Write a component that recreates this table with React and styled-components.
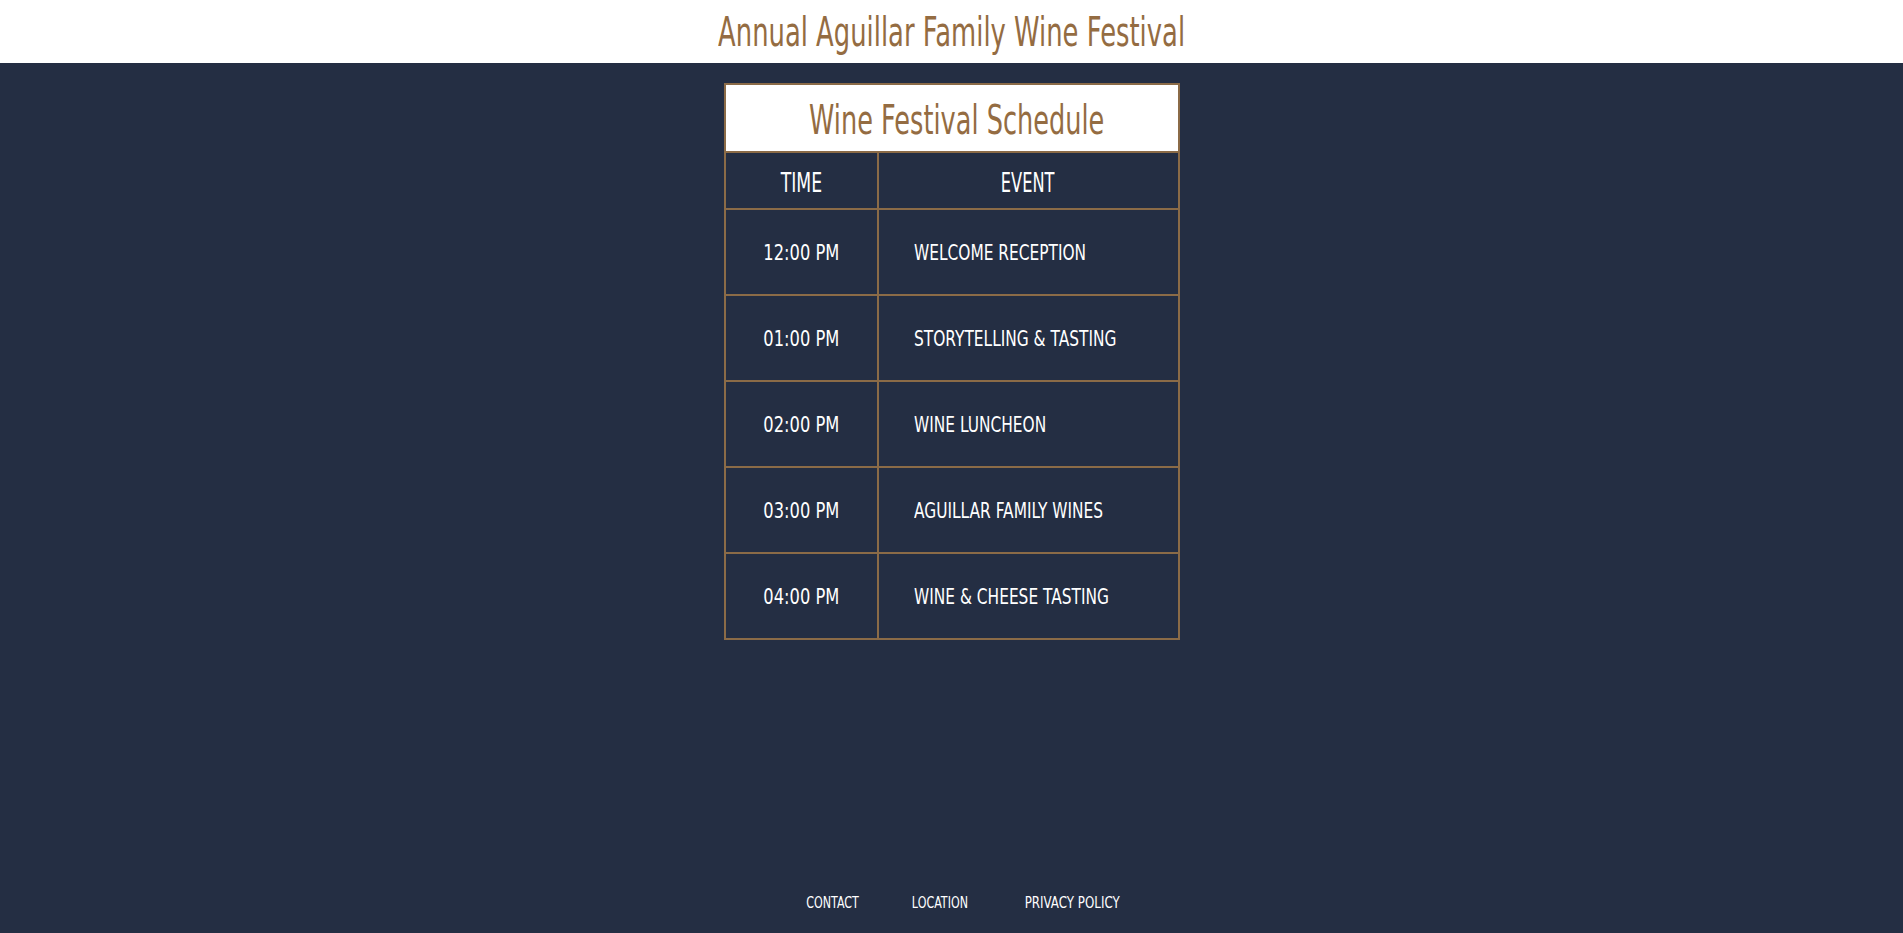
import React from 'react';
import styled, { createGlobalStyle } from 'styled-components';

const GlobalStyle = createGlobalStyle`
  html, body {
    margin: 0;
    padding: 0;
  }
  body {
    background: #242e43;
    font-family: "DejaVu Sans", "Liberation Sans", sans-serif;
  }
`;

// no condensed face installed, so narrow the glyphs by hand
const Narrow = styled.span`
  display: inline-block;
  white-space: nowrap;
  transform: scaleX(${(props) => props.$scale || 0.7});
  transform-origin: ${(props) => props.$origin || 'center'};
`;

const Page = styled.div`
  display: flex;
  flex-direction: column;
  min-height: 100vh;
`;

const Header = styled.header`
  height: 63px;
  background: #ffffff;
  display: flex;
  align-items: center;
  justify-content: center;
`;

const SiteTitle = styled.h1`
  margin: 0;
  font-size: 41px;
  font-weight: 400;
  color: #946c42;
`;

const Main = styled.main`
  flex: 1;
  display: flex;
  justify-content: center;
  align-items: flex-start;
  padding-top: 20px;
`;

const Schedule = styled.table`
  width: 456px;
  table-layout: fixed;
  border-collapse: collapse;
  border: 2px solid #8b6b47;
`;

const Column = styled.col`
  width: ${(props) => props.width || 'auto'};
`;

const Caption = styled.th`
  height: 60px;
  padding: 5px 0 1px;
  background: #ffffff;
  color: #946c42;
  font-size: 40px;
  font-weight: 400;
  border: 2px solid #8b6b47;
`;

const HeadCell = styled.th`
  height: 52px;
  padding: 3px 0 0;
  color: #ffffff;
  font-size: 27px;
  font-weight: 400;
  text-align: center;
  border: 2px solid #8b6b47;
`;

const Cell = styled.td`
  height: 81px;
  padding: 2px 0 1px;
  padding-left: ${(props) => (props.left ? '35px' : '0')};
  color: #ffffff;
  font-size: 22px;
  text-align: ${(props) => (props.left ? 'left' : 'center')};
  border: 2px solid #8b6b47;
`;

const Footer = styled.footer`
  display: flex;
  justify-content: center;
  padding: 0 0 21px 27px;
`;

const FooterLinks = styled.ul`
  display: flex;
  gap: 34px;
  margin: 0;
  padding: 0;
  list-style: none;
`;

const FooterLink = styled.a`
  color: #ffffff;
  text-decoration: none;
  font-size: 15px;
`;

const events = [
  { time: '12:00 PM', name: 'WELCOME RECEPTION' },
  { time: '01:00 PM', name: 'STORYTELLING & TASTING' },
  { time: '02:00 PM', name: 'WINE LUNCHEON' },
  { time: '03:00 PM', name: 'AGUILLAR FAMILY WINES' },
  { time: '04:00 PM', name: 'WINE & CHEESE TASTING' },
];

const links = [
  { label: 'CONTACT', scale: 0.74 },
  { label: 'LOCATION', scale: 0.74 },
  { label: 'PRIVACY POLICY', scale: 0.79 },
];

export default function App() {
  return (
    <Page>
      <GlobalStyle />
      <Header>
        <SiteTitle>
          <Narrow $scale={0.63}>Annual Aguillar Family Wine Festival</Narrow>
        </SiteTitle>
      </Header>
      <Main>
        <Schedule>
          <colgroup>
            <Column width="153px" />
            <Column />
          </colgroup>
          <thead>
            <tr>
              <Caption colSpan={2}>
                <Narrow $scale={0.64}>Wine Festival Schedule</Narrow>
              </Caption>
            </tr>
            <tr>
              <HeadCell><Narrow $scale={0.64}>TIME</Narrow></HeadCell>
              <HeadCell><Narrow $scale={0.6}>EVENT</Narrow></HeadCell>
            </tr>
          </thead>
          <tbody>
            {events.map((ev) => (
              <tr key={ev.time}>
                <Cell><Narrow $scale={0.74}>{ev.time}</Narrow></Cell>
                <Cell left><Narrow $scale={0.7} $origin="left">{ev.name}</Narrow></Cell>
              </tr>
            ))}
          </tbody>
        </Schedule>
      </Main>
      <Footer>
        <FooterLinks>
          {links.map((link) => (
            <li key={link.label}>
              <FooterLink href="#"><Narrow $scale={link.scale}>{link.label}</Narrow></FooterLink>
            </li>
          ))}
        </FooterLinks>
      </Footer>
    </Page>
  );
}
